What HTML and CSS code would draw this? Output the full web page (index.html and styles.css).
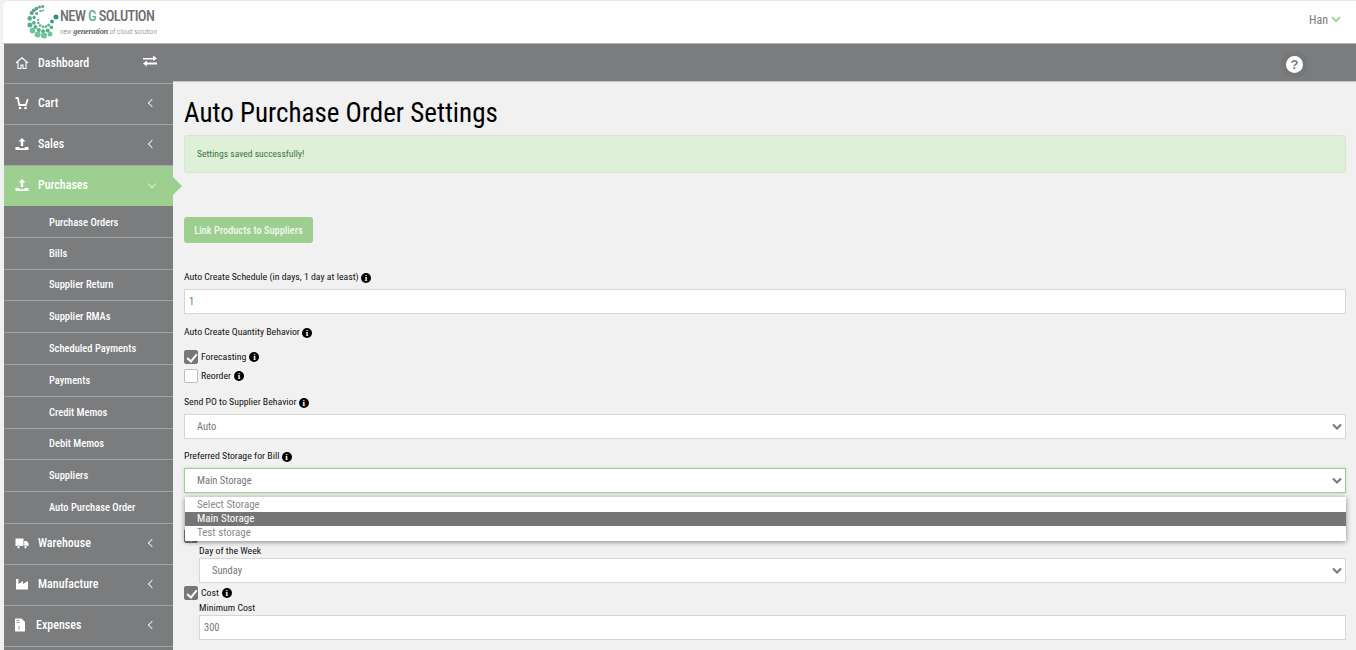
FILE: index.html
```html
<!DOCTYPE html>
<html lang="en">
<head>
    <meta charset="UTF-8">
    <meta name="viewport" content="width=device-width, initial-scale=1.0">
    <title>Auto Purchase Order Settings</title>
    <link rel="stylesheet" href="styles.css">
</head>
<body>
<div class="app">
    <header class="top-header">
        <div class="logo">
            <svg class="logo-mark" width="32" height="36" viewBox="26 4 32 36">
                <g fill="#5f9f8e">
                    <circle cx="41.7" cy="6.5" r="1.5"/><circle cx="38.500" cy="7" r="1.500"/><circle cx="35.500" cy="8.500" r="1.800"/><circle cx="32.800" cy="10.300" r="1.900"/><circle cx="30.700" cy="13" r="2.100"/>
                    <circle cx="39.400" cy="11.100" r="1.200"/><circle cx="35.600" cy="13.600" r="1.500"/><circle cx="33.100" cy="17.400" r="1.600"/>
                    <circle cx="37.100" cy="20" r="1.100"/><circle cx="37.400" cy="23" r="1.200"/><circle cx="42" cy="10.500" r="1"/>
                </g>
                <g fill="#58b08c">
                    <circle cx="28.700" cy="18.400" r="2.300"/><circle cx="28.900" cy="24.900" r="2.500"/><circle cx="32.900" cy="22.800" r="1.900"/>
                    <circle cx="34.400" cy="27" r="2"/><circle cx="39.100" cy="25.600" r="1.300"/><circle cx="42" cy="26.900" r="1.300"/>
                    <circle cx="45" cy="26.600" r="1.300"/><circle cx="47.600" cy="24.900" r="1.500"/><circle cx="37.800" cy="30.100" r="2.100"/>
                    <circle cx="42.100" cy="31.200" r="2"/><circle cx="46.600" cy="30.600" r="2"/><circle cx="50.400" cy="27.400" r="1.800"/>
                </g>
                <g fill="#6cc59b">
                    <circle cx="31.500" cy="30.600" r="2.800"/><circle cx="36.700" cy="34.400" r="3"/><circle cx="43" cy="35.600" r="3"/>
                    <circle cx="49" cy="34" r="2.500"/>
                </g>
                <circle cx="51" cy="21.500" r="1.900" fill="#3f9a86"/>
                <circle cx="55" cy="17" r="2.500" fill="#2f8f80"/>
            </svg>
            <div class="logo-text">
                <div class="logo-name">NEW <span class="logo-g">G</span> SOLUTION</div>
                <div class="logo-tag">new <em>generation</em> of cloud solution</div>
            </div>
        </div>
        <div class="user-menu">Han
            <svg width="10" height="7" viewBox="0 0 10 7"><path d="M1 1.2l4 4 4-4" fill="none" stroke="#9ccf90" stroke-width="1.8"/></svg>
        </div>
    </header>

    <div class="main-row">
        <nav class="sidebar">
            <a class="nav-item nav-dash">
                <svg class="nav-icon" width="14" height="14" viewBox="0 0 14 14"><path d="M1 7l6-5.2L13 7M3 6v6.500h3V9h2v3.500h3V6" fill="none" stroke="#fff" stroke-width="1.100"/></svg>
                <span class="nav-label">Dashboard</span>
                <svg class="nav-swap" width="14" height="12" viewBox="0 0 14 12"><path d="M0 3h10V0.500L14 3.500 10 6V4.500H0zM14 7.500H4V5.500L0 8.500 4 11.500V9.500H14z" fill="#fff"/></svg>
            </a>
            <a class="nav-item">
                <svg class="nav-icon" width="14" height="14" viewBox="0 0 14 14"><path d="M0.500 2h2.300l1.500 7h6.500l2-6" fill="none" stroke="#fff" stroke-width="1.800"/><circle cx="5" cy="12" r="1.300" fill="#fff"/><circle cx="10.500" cy="12" r="1.300" fill="#fff"/></svg>
                <span class="nav-label">Cart</span>
                <span class="chev chev-left"></span>
            </a>
            <a class="nav-item">
                <svg class="nav-icon" width="14" height="14" viewBox="0 0 14 14"><path d="M7 1l3.500 3.500H8.200V9H5.800V4.500H3.500zM0.500 10h3.800v1.200h5.400V10h3.800v3H0.500z" fill="#fff"/></svg>
                <span class="nav-label">Sales</span>
                <span class="chev chev-left"></span>
            </a>
            <a class="nav-item nav-active">
                <svg class="nav-icon" width="14" height="14" viewBox="0 0 14 14"><path d="M7 1l3.500 3.500H8.200V9H5.800V4.500H3.500zM0.500 10h3.800v1.200h5.400V10h3.800v3H0.500z" fill="#fff"/></svg>
                <span class="nav-label">Purchases</span>
                <span class="chev chev-down"></span>
            </a>
            <div class="sub-nav">
                <a class="sub-item">Purchase Orders</a>
                <a class="sub-item">Bills</a>
                <a class="sub-item">Supplier Return</a>
                <a class="sub-item">Supplier RMAs</a>
                <a class="sub-item">Scheduled Payments</a>
                <a class="sub-item">Payments</a>
                <a class="sub-item">Credit Memos</a>
                <a class="sub-item">Debit Memos</a>
                <a class="sub-item">Suppliers</a>
                <a class="sub-item">Auto Purchase Order</a>
            </div>
            <a class="nav-item">
                <svg class="nav-icon" width="14" height="14" viewBox="0 0 14 14"><path d="M0.500 2.500h8v7.500h-8zM9.200 5h2.600l1.700 2.200V10H9.200z" fill="#fff"/><circle cx="3.500" cy="11" r="1.500" fill="#fff" stroke="#7b7c7e" stroke-width="0.600"/><circle cx="10.500" cy="11" r="1.500" fill="#fff" stroke="#7b7c7e" stroke-width="0.600"/></svg>
                <span class="nav-label">Warehouse</span>
                <span class="chev chev-left"></span>
            </a>
            <a class="nav-item">
                <svg class="nav-icon" width="14" height="14" viewBox="0 0 14 14"><path d="M1 2h2.500v5L8 4v3l5-3v8.500H1z" fill="#fff"/></svg>
                <span class="nav-label">Manufacture</span>
                <span class="chev chev-left"></span>
            </a>
            <a class="nav-item nav-expense">
                <svg class="nav-icon" width="10" height="14" viewBox="0 0 10 14"><path d="M0 0.500h6.500L10 4v9.500H0z" fill="#fff"/><path d="M1.500 2.500h3M1.500 4.500h3M4 8v3.500" stroke="#7b7c7e" stroke-width="0.800"/></svg>
                <span class="nav-label">Expenses</span>
                <span class="chev chev-left"></span>
            </a>
        </nav>

        <div class="content-col">
            <div class="top-bar">
                <div class="help-btn">?</div>
            </div>
            <main class="content">
                <h1>Auto Purchase Order Settings</h1>
                <div class="alert">Settings saved successfully!</div>
                <button class="btn-link">Link Products to Suppliers</button>

                <div class="field field-schedule">
                    <label class="field-label">Auto Create Schedule (in days, 1 day at least) <i class="info">i</i></label>
                    <input class="form-input" type="text" value="1">
                </div>

                <div class="field-label label-qty">Auto Create Quantity Behavior <i class="info">i</i></div>
                <label class="check-row"><input type="checkbox" checked> Forecasting <i class="info">i</i></label>
                <label class="check-row check-row-second"><input type="checkbox"> Reorder <i class="info">i</i></label>

                <div class="field field-send">
                    <label class="field-label">Send PO to Supplier Behavior <i class="info">i</i></label>
                    <select class="form-input"><option>Auto</option></select>
                </div>

                <div class="field field-storage">
                    <label class="field-label">Preferred Storage for Bill <i class="info">i</i></label>
                    <select class="form-input form-input-focus"><option>Main Storage</option></select>
                    <ul class="select-menu">
                        <li>Select Storage</li>
                        <li class="selected">Main Storage</li>
                        <li>Test storage</li>
                    </ul>
                </div>

                <label class="check-row check-row-hidden"><input type="checkbox" checked></label>
                <div class="sub-field sub-field-day">
                    <label class="field-label">Day of the Week</label>
                    <select class="form-input"><option>Sunday</option></select>
                </div>

                <label class="check-row check-row-cost"><input type="checkbox" checked> Cost <i class="info">i</i></label>
                <div class="sub-field sub-field-cost">
                    <label class="field-label">Minimum Cost</label>
                    <input class="form-input" type="text" value="300">
                </div>
            </main>
        </div>
    </div>
</div>
</body>
</html>
```

FILE: styles.css
```css
* {
    box-sizing: border-box;
}
html, body {
    margin: 0;
    height: 650px;
    overflow: hidden;
}
body {
    background-color: #f1f1f1;
    font-family: Roboto, "Liberation Sans", sans-serif;
    font-stretch: 75%;
    color: #111;
}
.app {
    height: 650px;
    padding-left: 4px;
    background-color: #f1f1f1;
}

/* header */
.top-header {
    height: 44px;
    margin-left: -1px;
    padding: 0 15px 0 24px;
    display: flex;
    justify-content: space-between;
    align-items: center;
    background-color: #fff;
    border-top: 1px solid #e8e8e8;
    border-bottom: 1px solid #b5b5b5;
    border-top-left-radius: 6px;
}
.logo {
    display: flex;
    align-items: center;
    gap: 1px;
}
.logo-text {
    padding-top: 2px;
}
.logo-name {
    font-size: 14.5px;
    font-weight: 500;
    line-height: 15px;
    letter-spacing: -0.6px;
    color: #6f7072;
}
.logo-g {
    color: #5fb58c;
}
.logo-tag {
    font-size: 7.3px;
    font-weight: 300;
    line-height: 10px;
    margin-top: 2px;
    color: #777;
}
.logo-tag em {
    font-family: "Liberation Serif", serif;
    font-size: 8.5px;
    font-weight: 700;
    letter-spacing: -0.3px;
    color: #666;
}
.user-menu {
    font-size: 12px;
    color: #7a7a7a;
    display: flex;
    align-items: center;
    gap: 3px;
    margin-top: -5px;
}

.main-row {
    display: flex;
}

/* sidebar */
.sidebar {
    width: 169px;
    height: 606px;
    flex-shrink: 0;
    background-color: #7b7c7e;
}
.nav-item {
    height: 41px;
    padding: 0 15px 2px 11px;
    display: flex;
    align-items: center;
    color: #fff;
    font-size: 12px;
    font-weight: 500;
    border-bottom: 1px solid #a3a4a5;
    position: relative;
}
.nav-dash {
    height: 40px;
}
.nav-icon {
    flex-shrink: 0;
}
.nav-label {
    margin-left: 9px;
    flex: 1;
}
.nav-swap {
    margin-right: 1px;
    margin-top: -4px;
}
.nav-active {
    background-color: #9ccf90;
    border-bottom: 0;
    height: 40px;
}
.nav-active::after {
    content: "";
    position: absolute;
    left: 100%;
    top: 11px;
    border-left: 9px solid #9ccf90;
    border-top: 9px solid transparent;
    border-bottom: 9px solid transparent;
}
.nav-expense .nav-label {
    margin-left: 11px;
}
.chev {
    width: 6px;
    height: 6px;
    border-left: 1px solid #e8e8e8;
    border-bottom: 1px solid #e8e8e8;
}
.chev-left {
    transform: rotate(45deg);
    margin-right: 3px;
}
.chev-down {
    transform: rotate(-45deg);
    margin-right: 3px;
    margin-top: -3px;
}
.sub-item {
    height: 31.8px;
    display: flex;
    align-items: center;
    padding-left: 45px;
    color: #fff;
    font-size: 10.5px;
    font-weight: 500;
    border-bottom: 1px solid #a3a4a5;
}
.sub-item:first-child {
    padding-top: 2px;
}

/* top bar */
.content-col {
    flex: 1;
    min-width: 0;
}
.top-bar {
    height: 38px;
    padding: 3px 53px 0 0;
    background-color: #7b7c7e;
    border-bottom: 1px solid #c4c4c4;
    display: flex;
    justify-content: flex-end;
    align-items: center;
}
.help-btn {
    width: 17px;
    height: 17px;
    border-radius: 50%;
    background-color: #fff;
    color: #7b7c7e;
    font-size: 13px;
    font-weight: 700;
    line-height: 17px;
    text-align: center;
    font-family: "Liberation Sans", sans-serif;
    font-stretch: normal;
    box-shadow: 0 0 0 5px rgba(0,0,0,0.04);
}

/* form */
.content {
    padding: 0 10px 0 11px;
}
h1 {
    margin: 0;
    padding-top: 14px;
    font-size: 27px;
    line-height: 34px;
    font-weight: 400;
    color: #000;
}
.alert {
    margin-top: 5px;
    height: 38px;
    padding: 0 0 2px 12px;
    display: flex;
    align-items: center;
    font-size: 9.6px;
    color: #3c763d;
    background-color: #dff0d8;
    border: 1px solid #d6e9c6;
    border-radius: 3px;
}
.btn-link {
    display: block;
    margin-top: 44px;
    height: 26px;
    width: 129px;
    padding: 0;
    font-family: inherit;
    font-stretch: inherit;
    font-size: 10.4px;
    font-weight: 500;
    color: #f1f8ee;
    background-color: #9ccf90;
    border: 0;
    border-radius: 3px;
}
.field-label {
    display: block;
    height: 11px;
    font-size: 9.8px;
    line-height: 11px;
    color: #111;
}
.form-input {
    display: block;
    width: 100%;
    height: 25px;
    padding: 0 9px;
    font-family: inherit;
    font-stretch: inherit;
    font-size: 10.5px;
    color: #777;
    background-color: #fff;
    border: 1px solid #d6d6d6;
    border-radius: 0;
}
select.form-input {
    appearance: none;
    padding-left: 12px;
    background-image: url("data:image/svg+xml,%3Csvg xmlns='http://www.w3.org/2000/svg' width='10' height='7'%3E%3Cpath d='M1 1.500l4 4 4-4' fill='none' stroke='%23777' stroke-width='2'/%3E%3C/svg%3E");
    background-repeat: no-repeat;
    background-position: right 3px center;
}
input.form-input {
    padding: 0 4px;
}
.field .field-label {
    margin-bottom: 7px;
}
.sub-field .field-label {
    height: 13px;
    line-height: 13px;
    margin-bottom: 1px;
}
.form-input-focus {
    border-color: #9ccf90;
    box-shadow: 0 0 3px rgba(156,207,144,0.6);
}
.field-schedule {
    margin-top: 28px;
}
.label-qty {
    margin-top: 12px;
    margin-bottom: 13px;
}
.field-send {
    margin-top: 13px;
}
.field-storage {
    margin-top: 11px;
    position: relative;
}
.info {
    display: inline-block;
    width: 10px;
    height: 10px;
    border-radius: 50%;
    background-color: #000;
    color: #fff;
    font-family: "Liberation Serif", serif;
    font-stretch: normal;
    font-style: normal;
    font-weight: 700;
    font-size: 9px;
    line-height: 10px;
    text-align: center;
    vertical-align: -1px;
}
.check-row {
    display: flex;
    align-items: center;
    gap: 3px;
    height: 14px;
    font-size: 9.8px;
    line-height: 14px;
}
.check-row-second {
    margin-top: 5px;
}
.check-row input {
    appearance: none;
    width: 14px;
    height: 14px;
    margin: 0;
    position: relative;
    background-color: #fff;
    border: 1px solid #bbb;
    border-radius: 2px;
}
.check-row input:checked {
    background-color: #777;
    border-color: #777;
}
.check-row input:checked::after {
    content: "";
    position: absolute;
    left: 4px;
    top: 1px;
    width: 4px;
    height: 8px;
    border-right: 2px solid #fff;
    border-bottom: 2px solid #fff;
    transform: rotate(40deg);
}
.check-row-hidden {
    margin-top: 36px;
}
.sub-field {
    margin-left: 15px;
}
.sub-field-day {
    margin-top: 1px;
}
.check-row-cost {
    margin-top: 3px;
}
.sub-field-cost {
    margin-top: 1px;
}

/* open dropdown */
.select-menu {
    position: absolute;
    z-index: 5;
    top: 47px;
    left: 1px;
    right: 0;
    margin: 0;
    padding: 1px 0 1px;
    list-style: none;
    background-color: #fff;
    box-shadow: 0 1px 5px rgba(0,0,0,0.45);
}
.select-menu li {
    height: 14px;
    padding-left: 12px;
    font-size: 11px;
    line-height: 14px;
    color: #8a8a8a;
}
.select-menu li.selected {
    background-color: #757575;
    color: #fff;
}
```
